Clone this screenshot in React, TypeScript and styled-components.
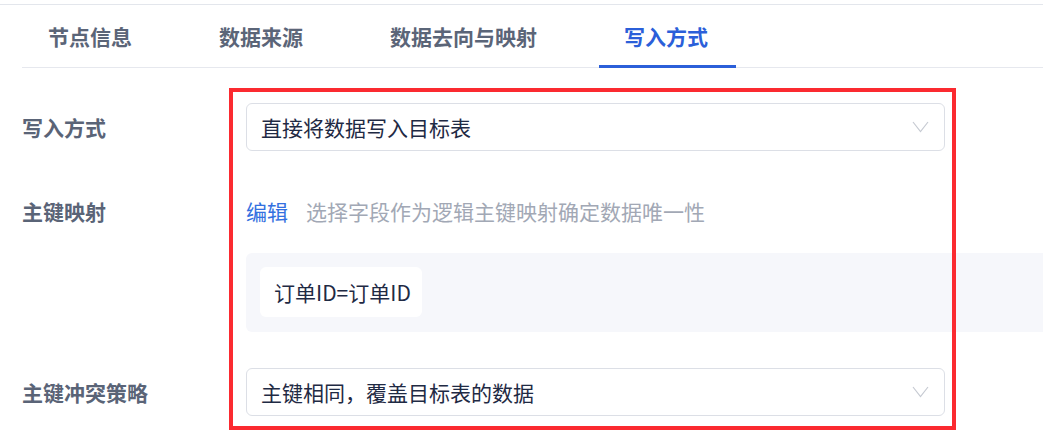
import React from 'react';
import styled, { createGlobalStyle } from 'styled-components';

const GlobalStyle = createGlobalStyle`
  * {
    box-sizing: border-box;
  }

  body {
    margin: 0;
    background: #ffffff;
    font-family: 'Noto Sans CJK SC', 'Noto Sans', sans-serif;
    font-size: 21px;
    color: #1f2a44;
  }
`;

const TABS = ['节点信息', '数据来源', '数据去向与映射', '写入方式'];

const Page = styled.div`
  position: relative;
  width: 1043px;
  height: 436px;
  padding-top: 4px;
  overflow: hidden;
`;

const Header = styled.div`
  border-top: 1px solid #e3e6ec;
`;

const TabBar = styled.ul`
  display: flex;
  gap: 35px;
  margin: 0 0 0 22px;
  padding: 0;
  list-style: none;
  border-bottom: 1px solid #e6e8ee;
`;

const Tab = styled.li<{ active?: boolean }>`
  position: relative;
  height: 62px;
  display: flex;
  align-items: center;
  padding: 0 26px;
  font-weight: 700;
  line-height: 1;
  color: ${({ active }) => (active ? '#2b5fd9' : '#5b6578')};

  &::after {
    content: '';
    display: ${({ active }) => (active ? 'block' : 'none')};
    position: absolute;
    left: 1px;
    right: -2px;
    bottom: -1px;
    height: 3px;
    background: #2b5fd9;
  }
`;

const Form = styled.div`
  display: flex;
  flex-direction: column;
  gap: 36px;
  padding: 35px 0 0 22px;
`;

const FormItem = styled.div`
  display: grid;
  grid-template-columns: 224px 1fr;
  align-items: start;
`;

const Label = styled.div`
  height: 48px;
  line-height: 48px;
  font-weight: 700;
  color: #5a6477;
  white-space: nowrap;
`;

const Field = styled.div`
  display: flex;
  flex-direction: column;
  min-width: 0;
`;

const Select = styled.div`
  width: 699px;
  height: 48px;
  display: flex;
  align-items: center;
  justify-content: space-between;
  padding: 0 15px 0 14px;
  border: 1px solid #dcdfe6;
  border-radius: 6px;
  color: #1f2a44;
  white-space: nowrap;
`;

const Chevron = () => (
  <svg width="17" height="12" viewBox="0 0 17 12" fill="none">
    <polyline points="1,1 8.5,10.5 16,1" stroke="#c6cad2" strokeWidth="1.2" />
  </svg>
);

const EditLine = styled.div`
  height: 48px;
  display: flex;
  align-items: center;
  gap: 18px;
  white-space: nowrap;
`;

const EditLink = styled.span`
  color: #3370e0;
  cursor: pointer;
`;

const Hint = styled.span`
  color: #a2a8b5;
`;

const MappingBox = styled.div`
  margin-top: 18px;
  padding: 14px 14px 15px;
  background: #f6f7fb;
  border-radius: 6px 0 0 6px;
  display: flex;
  gap: 10px;
`;

const Chip = styled.div`
  height: 50px;
  display: flex;
  align-items: center;
  padding: 0 11px 0 14px;
  background: #ffffff;
  border-radius: 6px;
  color: #1f2a44;
  white-space: nowrap;
`;

const Highlight = styled.div`
  position: absolute;
  left: 229px;
  top: 88px;
  width: 727px;
  height: 342px;
  border: 4px solid #fb2a30;
  pointer-events: none;
`;

export default function App() {
  return (
    <Page>
      <GlobalStyle />
      <Header>
        <TabBar>
          {TABS.map((t, i) => (
            <Tab key={t} active={i === TABS.length - 1}>
              {t}
            </Tab>
          ))}
        </TabBar>
      </Header>

      <Form>
        <FormItem>
          <Label>写入方式</Label>
          <Field>
            <Select>
              <span>直接将数据写入目标表</span>
              <Chevron />
            </Select>
          </Field>
        </FormItem>

        <FormItem>
          <Label>主键映射</Label>
          <Field>
            <EditLine>
              <EditLink>编辑</EditLink>
              <Hint>选择字段作为逻辑主键映射确定数据唯一性</Hint>
            </EditLine>
            <MappingBox>
              <Chip>订单ID=订单ID</Chip>
            </MappingBox>
          </Field>
        </FormItem>

        <FormItem>
          <Label>主键冲突策略</Label>
          <Field>
            <Select>
              <span>主键相同，覆盖目标表的数据</span>
              <Chevron />
            </Select>
          </Field>
        </FormItem>
      </Form>

      <Highlight />
    </Page>
  );
}
